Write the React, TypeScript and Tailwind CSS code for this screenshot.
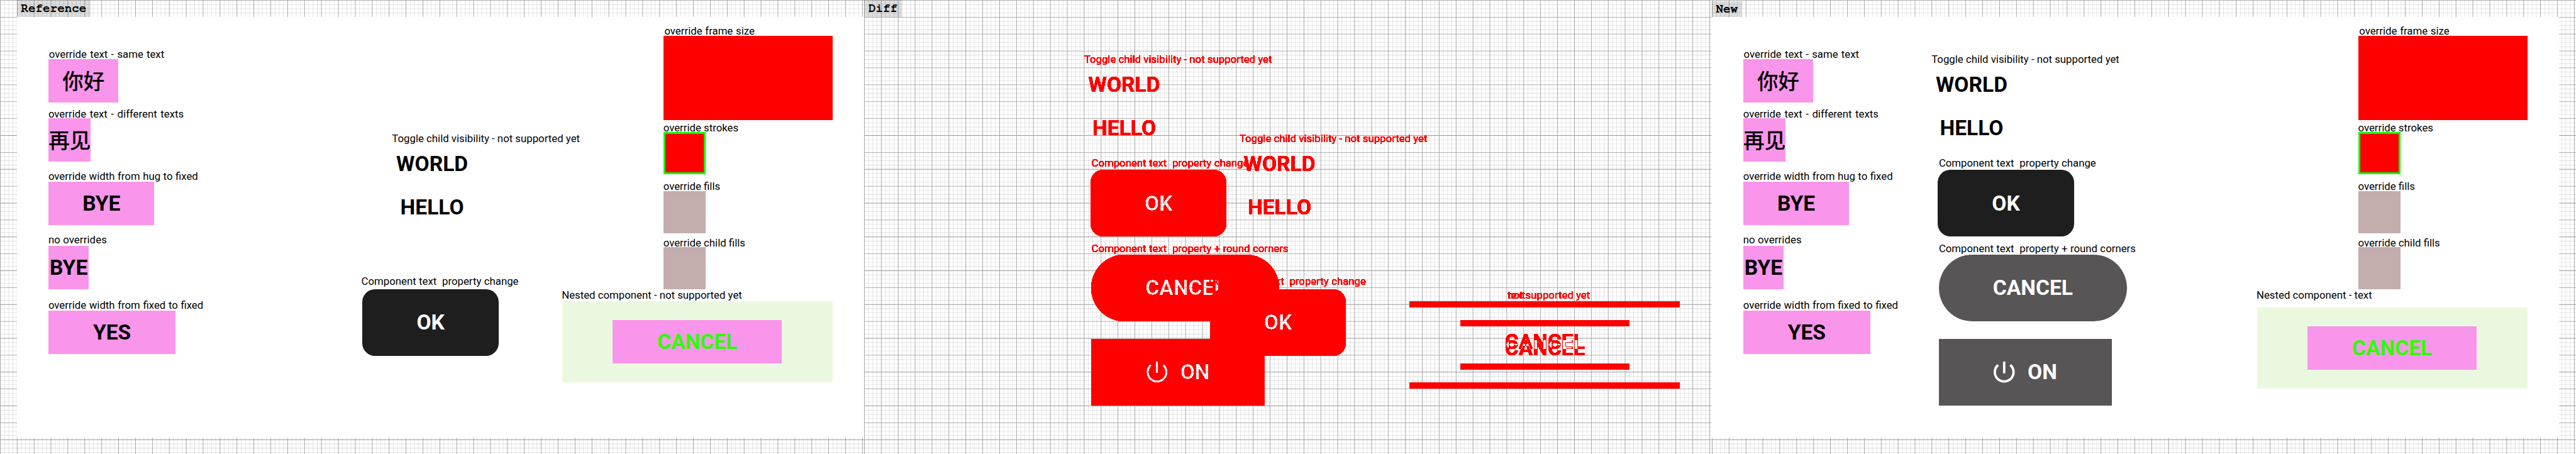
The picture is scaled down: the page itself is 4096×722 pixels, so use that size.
import React from "react";

const ROBOTO = "font-['Roboto',sans-serif]";
const BIG = "text-[33.6px] leading-none font-bold whitespace-pre";
const NOTE = "text-[16.8px] leading-[18px] whitespace-pre";

/* 8px / 32px ruled paper, drawn in unscaled units */
function Grid({ width, className }: { width: number; className: string }) {
  let minor = "";
  let major = "";
  for (let x = 0; x < width; x += 8) {
    const seg = `M${x} 0h1v860h-1z`;
    if (x % 32 === 0) major += seg;
    else minor += seg;
  }
  for (let y = 0; y < 860; y += 8) {
    const seg = `M0 ${y}h${width}v1h-${width}z`;
    if (y % 32 === 0) major += seg;
    else minor += seg;
  }
  return (
    <svg
      className={`absolute inset-y-0 left-0 h-[722.4px] ${className}`}
      viewBox={`0 0 ${width} 860`}
      preserveAspectRatio="none"
      aria-hidden="true"
    >
      <path d={minor} fill="#e0e0e0" />
      <path d={major} fill="#999999" />
    </svg>
  );
}

function Title({ children, className = "" }: { children: string; className?: string }) {
  return (
    <div className="flex h-[26.9px] items-end">
      <div
        className={`relative flex items-center bg-black/[0.135] px-[6.7px] font-['FreeMono','Liberation_Mono',monospace] text-[19.2px] leading-none font-bold text-black ${className}`}
      >
        {children}
      </div>
    </div>
  );
}

function Note({ children, className }: { children: string; className: string }) {
  return <div className={`shrink-0 text-black ${NOTE} ${className}`}>{children}</div>;
}

function Tag({ children, className }: { children: React.ReactNode; className: string }) {
  return (
    <div
      className={`flex h-[68.88px] shrink-0 items-center justify-center bg-[#f995ea] ${BIG} ${className}`}
    >
      {children}
    </div>
  );
}

function TextOverrides() {
  return (
    <div className="flex w-[340px] shrink-0 flex-col pt-[49.7px] pl-[50.4px]">
      <Note className="ml-[0.5px] h-[17.5px] [word-spacing:1.03px]">override text - same text</Note>
      <Tag className="w-[110.9px] pb-px">
        <span className="font-['Noto_Sans_CJK_SC',sans-serif] font-medium">你好</span>
      </Tag>
      <Note className="mt-[9.37px] -ml-[0.4px] h-[15.84px] [word-spacing:1.4px]">override text - different texts</Note>
      <Tag className="w-[67.2px] pb-px">
        <span className="font-['Noto_Sans_CJK_SC',sans-serif] font-medium">再见</span>
      </Tag>
      <Note className="mt-[13.93px] -ml-[0.4px] h-[17.99px] [word-spacing:0.35px]">override width from hug to fixed</Note>
      <Tag className="w-[168px]">BYE</Tag>
      <Note className="mt-[14.5px] -ml-[0.4px] h-[19.1px] tracking-[0.1px]">no overrides</Note>
      <Tag className="w-[63.8px]">BYE</Tag>
      <Note className="mt-[15.85px] -ml-[0.4px] h-[17.76px] [word-spacing:0.45px]">override width from fixed to fixed</Note>
      <Tag className="w-[201.6px]">YES</Tag>
    </div>
  );
}

function ToggleChild({ className }: { className: string }) {
  return (
    <div className={`flex flex-col ${className}`}>
      <div className={`h-[15.6px] ${NOTE}`}>Toggle child visibility - not supported yet</div>
      <div className={`flex h-[68.88px] w-[127.7px] items-center justify-center ${BIG}`}>WORLD</div>
      <div className={`flex h-[68.88px] w-[127.7px] items-center justify-center ${BIG}`}>HELLO</div>
    </div>
  );
}

function Button({ children, className }: { children: React.ReactNode; className: string }) {
  return (
    <div
      className={`flex h-[105.84px] shrink-0 items-center justify-center text-white ${BIG} ${className}`}
    >
      {children}
    </div>
  );
}

function PowerIcon() {
  return (
    <svg className="h-[33.6px] w-[33.6px] fill-white" viewBox="3 3 18 18" aria-hidden="true">
      <path d="M13 3h-2v10h2V3zm4.83 2.17l-1.42 1.42C17.99 7.86 19 9.81 19 12c0 3.87-3.13 7-7 7s-7-3.13-7-7c0-2.19 1.01-4.14 2.58-5.42L6.17 5.17C4.23 6.82 3 9.26 3 12c0 4.97 4.03 9 9 9s9-4.03 9-9c0-2.74-1.23-5.18-3.17-6.83z" />
    </svg>
  );
}

function FrameOverrides({ nested, nestedGap }: { nested: string; nestedGap: string }) {
  return (
    <div className="flex flex-1 flex-col pt-[12.7px]">
      <Note className="ml-[163.5px] h-[17.5px] [word-spacing:0.6px]">override frame size</Note>
      <div className="ml-[162.2px] h-[134.4px] w-[268.8px] bg-[#ff0000]" />
      <Note className="mt-[2.7px] ml-[161.8px] h-[15.8px]">override strokes</Note>
      <div className="ml-[162.2px] h-[67.2px] w-[67.2px] border-[3.36px] border-[#00ff00] bg-[#ff0000]" />
      <Note className="mt-[9.4px] ml-[161.8px] h-[17.5px]">override fills</Note>
      <div className="ml-[162.2px] h-[67.2px] w-[67.2px] bg-[#c4adad]" />
      <Note className="mt-[6px] ml-[161.8px] h-[15.85px]">override child fills</Note>
      <div className="ml-[162.2px] h-[67.2px] w-[67.2px] bg-[#c4adad]" />
      <Note className={`-mt-[0.7px] ml-[0.3px] ${nestedGap}`}>{nested}</Note>
      <div className="ml-[0.9px] flex h-[129.4px] w-[430.1px] items-center justify-center bg-[#ebf8e0]">
        <Tag className="w-[268.8px] text-[#2bff00]">CANCEL</Tag>
      </div>
    </div>
  );
}

function ReferencePanel() {
  return (
    <div className="relative flex h-[668.7px] w-[1347.4px] bg-white">
      <TextOverrides />
      <div className="flex w-[526px] shrink-0 flex-col pt-[184.3px]">
        <ToggleChild className="ml-[256.4px] text-black" />
        <Note className="mt-[73.6px] ml-[207.7px] h-[22.15px] [word-spacing:0.2px]">Component text  property change</Note>
        <Button className="ml-[209.4px] w-[216.7px] rounded-[20.2px] bg-[#1e1e1e]">OK</Button>
      </div>
      <FrameOverrides nested="Nested component - not supported yet" nestedGap="h-[19.2px]" />
    </div>
  );
}

function NewPanel() {
  return (
    <div className="relative flex h-[668.7px] w-[1347.4px] bg-white">
      <TextOverrides />
      <div className="flex w-[526px] shrink-0 flex-col pt-[58.3px]">
        <ToggleChild className="ml-[9.45px] text-black" />
        <Note className="mt-[11.4px] ml-[21.2px] h-[20.5px] [word-spacing:0.2px]">Component text  property change</Note>
        <Button className="ml-[19.5px] w-[216.7px] rounded-[20.2px] bg-[#1e1e1e]">OK</Button>
        <Note className="mt-[9.65px] ml-[21.2px] h-[18.9px] [word-spacing:0.2px]">Component text  property + round corners</Note>
        <Button className="ml-[21.2px] w-[299px] rounded-full bg-[#575556]">CANCEL</Button>
        <Button className="mt-[28.56px] ml-[21.2px] w-[275.5px] gap-[20.2px] bg-[#575556]">
          <PowerIcon />
          ON
        </Button>
      </div>
      <FrameOverrides nested="Nested component - text" nestedGap="h-[29.3px]" />
    </div>
  );
}

function Changed({ children, className }: { children?: React.ReactNode; className: string }) {
  return <div className={`absolute text-[#ff0000] ${className}`}>{children}</div>;
}

/* Overlay of both boards: changed pixels are red, everything white is keyed out to the paper. */
function DiffPanel() {
  return (
    <div className="relative h-[668.7px] w-[1347.4px]">
      <svg className="absolute h-0 w-0" aria-hidden="true">
        <filter id="diff-key" colorInterpolationFilters="sRGB" x="0" y="0" width="1" height="1">
          <feColorMatrix type="matrix" values="0 0 0 0 1  0 0 0 0 0  0 0 0 0 0  0 -4.5 0 4.5 0" />
        </filter>
      </svg>
      <div className="absolute inset-0 bg-white [filter:url(#diff-key)]">
        <Changed className="top-[58.3px] left-[349.45px]">
          <ToggleChild className="" />
        </Changed>
        <Changed className="top-[184.3px] left-[596.4px]">
          <ToggleChild className="" />
        </Changed>
        <Changed className={`top-[223.1px] left-[361.2px] [word-spacing:0.2px] ${NOTE}`}>
          {"Component text  property change"}
        </Changed>
        <Changed className="top-[243.6px] left-[359.5px]">
          <Button className="w-[216.7px] rounded-[20.2px] bg-[#ff0000]">OK</Button>
        </Changed>
        <Changed className={`top-[359.1px] left-[361.2px] [word-spacing:0.2px] ${NOTE}`}>
          {"Component text  property + round corners"}
        </Changed>
        <Changed className="top-[378px] left-[361.2px]">
          <Button className="w-[299px] rounded-full bg-[#ff0000]">CANCEL</Button>
        </Changed>
        <Changed className="top-[512.4px] left-[361.2px]">
          <Button className="w-[275.5px] gap-[20.2px] bg-[#ff0000]">
            <PowerIcon />
            ON
          </Button>
        </Changed>
        <Changed className={`top-[411.3px] left-[547.7px] [word-spacing:0.2px] ${NOTE}`}>
          {"Component text  property change"}
        </Changed>
        <Changed className="top-[433.45px] left-[549.4px]">
          <Button className="w-[216.7px] rounded-[20.2px] bg-[#ff0000]">OK</Button>
        </Changed>
        <Changed className={`top-[432.7px] left-[1022.8px] ${NOTE}`}>not supported yet</Changed>
        <Changed className={`top-[432.7px] left-[1022.8px] ${NOTE}`}>text</Changed>
        <Changed className="top-[451.94px] left-[866.9px] h-[10.1px] w-[430.1px] bg-[#ff0000]" />
        <Changed className="top-[482.2px] left-[947.6px] h-[10.1px] w-[268.8px] bg-[#ff0000]" />
        <Changed className="top-[551.1px] left-[947.6px] h-[10.1px] w-[268.8px] bg-[#ff0000]" />
        <Changed className="top-[581.3px] left-[866.9px] h-[10.1px] w-[430.1px] bg-[#ff0000]" />
        <div className="absolute top-[482.2px] left-[947.6px] flex h-[68.88px] w-[268.8px] items-center justify-center text-[#00ffff] mix-blend-difference">
          <span className={BIG}>CANCEL</span>
        </div>
        <div className="absolute top-[492.3px] left-[947.6px] flex h-[68.88px] w-[268.8px] items-center justify-center text-[#00ffff] mix-blend-difference">
          <span className={BIG}>CANCEL</span>
        </div>
      </div>
    </div>
  );
}

export default function App() {
  return (
    <div className={`flex h-[722px] w-[4096px] overflow-hidden bg-white ${ROBOTO}`}>
      <section className="relative w-[1374.3px] shrink-0 pl-[26.9px]">
        <Grid width={1636} className="w-[1374.3px]" />
        <Title className="h-[26.9px]">Reference</Title>
        <ReferencePanel />
      </section>
      <section className="relative w-[1347.4px] shrink-0">
        <Grid width={1604} className="w-[1347.4px]" />
        <Title className="h-[26.9px]">Diff</Title>
        <DiffPanel />
      </section>
      <section className="relative w-[1374.3px] shrink-0">
        <Grid width={1636} className="w-[1374.3px]" />
        <Title className="h-[25.2px]">New</Title>
        <NewPanel />
      </section>
    </div>
  );
}
